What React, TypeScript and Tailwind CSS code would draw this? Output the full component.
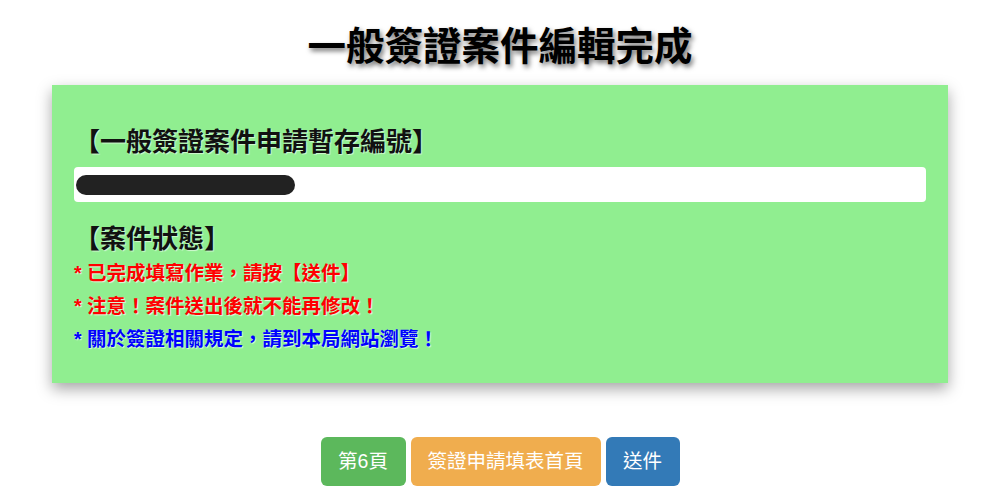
const cjk = '[font-family:"Liberation_Sans","Noto_Sans_CJK_TC",sans-serif]';

const notes = [
  { text: '* 已完成填寫作業，請按【送件】', tone: 'text-[#ff0000]' },
  { text: '* 注意！案件送出後就不能再修改！', tone: 'text-[#ff0000]' },
  { text: '* 關於簽證相關規定，請到本局網站瀏覽！', tone: 'text-[#0000ff]' },
];

export default function App() {
  return (
    <div className={`min-h-[503px] w-[1000px] bg-white ${cjk}`}>
      <h1 className="pt-[27px] text-center text-[38.5px] font-bold leading-[40px] text-black [text-shadow:2px_3px_5px_rgba(0,0,0,0.55)]">
        一般簽證案件編輯完成
      </h1>

      <div className="mx-[52px] mt-[18px] bg-[#90ee90] px-[22px] pt-[42px] pb-[27px] shadow-[0_6px_14px_rgba(0,0,0,0.35)]">
        <h2 className="text-[26px] font-bold leading-[31px] text-[#111] [text-shadow:1px_1px_1px_rgba(255,255,255,0.6)]">
          【一般簽證案件申請暫存編號】
        </h2>
        <div className="mt-[9px] flex h-[35px] items-center rounded-[4px] bg-white px-[2px]">
          <div className="h-[20px] w-[219px] rounded-full bg-[#222]" />
        </div>

        <h2 className="mt-[22px] text-[26px] font-bold leading-[31px] text-[#111] [text-shadow:1px_1px_1px_rgba(255,255,255,0.6)]">
          【案件狀態】
        </h2>
        <ul className="mt-[2px]">
          {notes.map((n) => (
            <li key={n.text} className={`text-[19.5px] font-bold leading-[33px] ${n.tone} [text-shadow:1px_1px_1px_rgba(255,255,255,0.7)]`}>
              {n.text}
            </li>
          ))}
        </ul>
      </div>

      <div className="mt-[54px] flex justify-center gap-[5px] text-[19.5px] leading-[49px] text-white">
        <button className="h-[49px] w-[85px] rounded-[6px] bg-[#5cb85c]">第6頁</button>
        <button className="h-[49px] w-[190px] rounded-[6px] bg-[#f0ad4e]">簽證申請填表首頁</button>
        <button className="h-[49px] w-[74px] rounded-[6px] bg-[#337ab7]">送件</button>
      </div>
    </div>
  );
}
